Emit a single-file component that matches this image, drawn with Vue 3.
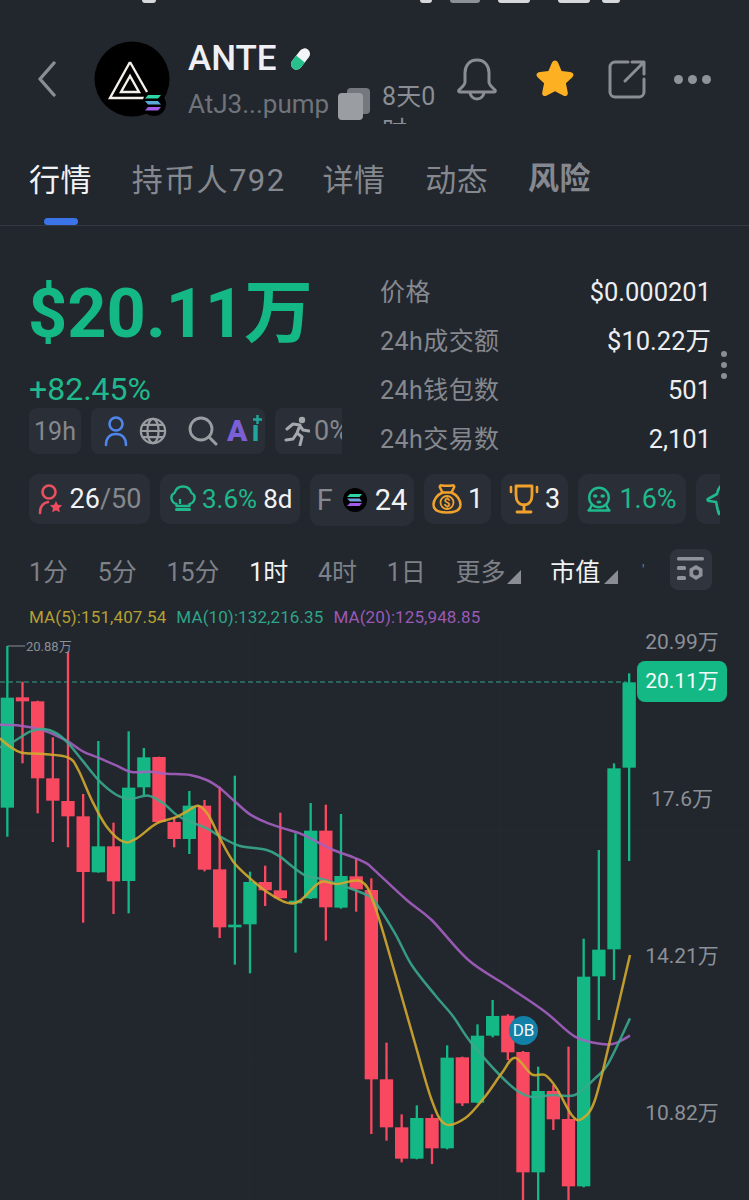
<script setup>
import { computed } from "vue";

// all chart numbers are in 3x units, y counted from the top of the chart
const candles = [
  ["g", 48, 203, 533, 620], ["r", 155, 202, 214, 400], ["r", 212, 214, 445, 550], ["r", 322, 445, 512, 636],
  ["r", 65, 513, 559, 652], ["r", 492, 559, 726, 878], ["g", 333, 649, 727, 728], ["r", 578, 649, 754, 852],
  ["g", 304, 473, 753, 850], ["g", 354, 382, 472, 495], ["r", 380, 381, 576, 576], ["r", 560, 576, 627, 652],
  ["g", 483, 527, 627, 672], ["r", 510, 527, 719, 724], ["r", 470, 718, 892, 924], ["g", 437, 884, 891, 1004],
  ["g", 725, 756, 883, 1030], ["r", 707, 756, 781, 828], ["r", 548, 781, 805, 805], ["g", 610, 812, 812, 968],
  ["g", 519, 602, 805, 807], ["r", 524, 602, 832, 932], ["g", 552, 738, 833, 836], ["r", 685, 739, 778, 845],
  ["r", 745, 780, 1348, 1512], ["r", 1238, 1348, 1492, 1532], ["r", 1453, 1492, 1586, 1597], ["g", 1426, 1464, 1586, 1588],
  ["r", 1453, 1464, 1555, 1602], ["g", 1246, 1283, 1555, 1558], ["r", 1280, 1282, 1420, 1428], ["g", 1183, 1217, 1418, 1420],
  ["g", 1110, 1158, 1217, 1222], ["r", 1153, 1157, 1267, 1290], ["r", 1263, 1266, 1627, 1720], ["g", 1310, 1383, 1627, 1720],
  ["r", 1365, 1383, 1468, 1500], ["r", 1250, 1467, 1669, 1720], ["g", 926, 1040, 1669, 1672], ["g", 660, 959, 1039, 1170],
  ["g", 400, 415, 958, 1050], ["g", 130, 157, 413, 693],
].map((c, i) => ({ up: c[0] === "g", x: 22 + 45.5 * i, hi: c[1], top: c[2], bot: c[3], lo: c[4] }));

const ma20 = [[0,284],[60,287],[120,298],[165,315],[205,335],[250,365],[300,385],[350,407],[395,426],[450,425],[500,431],[570,435],[620,450],[660,475],[705,515],[750,553],[800,578],[850,595],[900,610],[950,635],[1000,660],[1060,682],[1100,700],[1125,722],[1220,810],[1295,870],[1405,990],[1525,1070],[1635,1145],[1725,1220],[1805,1242],[1845,1240],[1890,1217]];
const ma10 = [[0,352],[40,335],[90,305],[130,297],[170,310],[205,340],[250,395],[300,455],[350,495],[390,507],[445,497],[490,520],[530,555],[570,575],[620,595],[670,625],[720,648],[800,660],[840,680],[880,712],[920,738],[970,748],[1050,775],[1100,795],[1125,815],[1185,910],[1235,1005],[1305,1095],[1360,1160],[1415,1240],[1525,1360],[1590,1400],[1655,1395],[1725,1395],[1785,1345],[1825,1300],[1890,1165]];
const ma5 = [[0,325],[30,350],[65,368],[130,372],[205,383],[235,420],[275,510],[320,590],[370,635],[410,625],[470,580],[525,563],[560,545],[595,527],[625,555],[660,625],[700,695],[750,745],[800,785],[860,818],[900,812],[960,757],[1010,762],[1085,755],[1125,830],[1185,1030],[1245,1240],[1295,1410],[1335,1482],[1395,1465],[1455,1400],[1505,1330],[1545,1283],[1595,1333],[1635,1335],[1670,1375],[1715,1455],[1745,1467],[1785,1410],[1835,1210],[1890,975]];

// catmull-rom through the points
const smooth = (pts) => {
  let d = `M${pts[0][0]} ${pts[0][1]}`;
  for (let i = 0; i < pts.length - 1; i++) {
    const a = pts[Math.max(i - 1, 0)];
    const b = pts[i];
    const c = pts[i + 1];
    const e = pts[Math.min(i + 2, pts.length - 1)];
    d += `C${b[0] + (c[0] - a[0]) / 6} ${b[1] + (c[1] - a[1]) / 6} ${c[0] - (e[0] - b[0]) / 6} ${c[1] - (e[1] - b[1]) / 6} ${c[0]} ${c[1]}`;
  }
  return d;
};

const lines = computed(() => [
  { d: smooth(ma20), color: "#a45fc0" },
  { d: smooth(ma10), color: "#3aa98d" },
  { d: smooth(ma5), color: "#d1a92f" },
]);

const tabs = ["行情", "持币人792", "详情", "动态", "风险"];
const stats = [
  ["价格", "$0.000201"],
  ["24h成交额", "$10.22万"],
  ["24h钱包数", "501"],
  ["24h交易数", "2,101"],
];
const frames = [
  { t: "1分" }, { t: "5分" }, { t: "15分" }, { t: "1时", on: true }, { t: "4时" }, { t: "1日" },
  { t: "更多", more: true }, { t: "市值", on: true, more: true },
];
</script>

<template>
  <div class="page">
    <div class="status">
      <i class="st" style="width: 14px; margin-left: 142px"></i>
      <i class="st" style="width: 12px; margin-left: 264px"></i>
      <i class="st" style="width: 30px; margin-left: 18px; opacity: 0.6"></i>
      <i class="st" style="width: 32px; margin-left: 18px"></i>
      <i class="st" style="width: 32px; margin-left: 28px"></i>
      <i class="st" style="width: 18px; margin-left: 12px"></i>
    </div>

    <header class="head">
      <svg class="back" width="20" height="36" viewBox="0 0 20 36">
        <path d="M17 2 3 18l14 16" fill="none" stroke="#8a8e94" stroke-width="3.4" stroke-linecap="round" stroke-linejoin="round" />
      </svg>

      <div class="avatar">
        <svg width="76" height="76" viewBox="0 0 76 76">
          <circle cx="38" cy="38" r="37.5" fill="#000" />
          <path d="M36 21 16 57h34M36 21l17 30" fill="none" stroke="#f4efe8" stroke-width="2.4" />
          <path d="M36 35 27 51h18z" fill="none" stroke="#f4efe8" stroke-width="2.4" />
          <circle cx="60" cy="63" r="12" fill="#000" />
          <path d="M54 54h13l-3 3.4H51z" fill="#2fd6a5" />
          <path d="M51 60h13l3 3.4H54z" fill="#5aa7d8" />
          <path d="M54 66h13l-3 3.4H51z" fill="#a25be8" />
        </svg>
      </div>

      <div class="name">
        <div class="title">
          <span class="ante">ANTE</span>
          <svg width="23" height="24" viewBox="0 0 23 24">
            <g transform="rotate(38 11.5 12)">
              <rect x="6" y="0" width="11" height="24" rx="5.5" fill="#f2f4f5" />
              <path d="M6 12h11v6.5a5.5 5.5 0 0 1-11 0z" fill="#27c08d" />
            </g>
          </svg>
        </div>
        <div class="addr">
          <span>AtJ3...pump</span>
          <svg width="32" height="32" viewBox="0 0 32 32">
            <rect x="9" y="0" width="23" height="26" rx="4" fill="#75797f" />
            <rect x="0" y="5" width="25" height="27" rx="4" fill="#9a9da2" />
          </svg>
          <span class="age">8天0<br />时</span>
        </div>
      </div>

      <div class="acts">
        <svg width="42" height="44" viewBox="0 0 42 44">
          <path d="M21 3c-8 0-12 6-12 13v9c0 3-3 5-6 8-1 1 0 2 1 2h34c1 0 2-1 1-2-3-3-6-5-6-8v-9c0-7-4-13-12-13z" fill="none" stroke="#8a8e94" stroke-width="3" stroke-linejoin="round" />
          <path d="M14 35a7 7 0 0 0 14 0" fill="none" stroke="#8a8e94" stroke-width="3" />
        </svg>
        <svg width="42" height="40" viewBox="0 0 42 40">
          <path d="M21 1.5c1.600 0 2.500 1 3.200 2.500l3.400 8 8.300.9c3.600.4 4.700 3.100 2.200 5.500l-6.200 5.900 1.800 8.800c.7 3.300-1.600 5-4.500 3.400L21 32.200l-8.200 4.300c-2.900 1.600-5.200-.1-4.500-3.400l1.800-8.800-6.200-5.900c-2.500-2.400-1.400-5.100 2.200-5.500l8.300-.9 3.400-8C18.500 2.500 19.400 1.500 21 1.500z" fill="#fdb022" />
        </svg>
        <svg width="38" height="40" viewBox="0 0 38 40">
          <path d="M20 3H7a5 5 0 0 0-5 5v25a5 5 0 0 0 5 5h24a5 5 0 0 0 5-5V20" fill="none" stroke="#8a8e94" stroke-width="3" stroke-linecap="round" />
          <path d="M24 3h12v12M35 4 17 22" fill="none" stroke="#8a8e94" stroke-width="3" stroke-linecap="round" stroke-linejoin="round" />
        </svg>
        <div class="dots"><i></i><i></i><i></i></div>
      </div>
    </header>

    <nav class="tabs">
      <div v-for="(t, i) in tabs" :key="t" class="tab" :class="{ on: i === 0, wide: i === 1, bold: i === 4 }">{{ t }}</div>
    </nav>

    <section class="summary">
      <div class="left">
        <div class="price">$20.11万</div>
        <div class="change">+82.45%</div>
        <div class="chips">
          <div class="chip age19">19h</div>
          <div class="chip links">
            <svg width="24" height="32" viewBox="0 0 24 32">
              <circle cx="12" cy="9" r="6.500" fill="none" stroke="#4f86ee" stroke-width="2.600" />
              <path d="M2 30c0-7 4-11 10-11s10 4 10 11" fill="none" stroke="#4f86ee" stroke-width="2.600" stroke-linecap="round" />
            </svg>
            <svg width="28" height="28" viewBox="0 0 30 30">
              <g fill="none" stroke="#9a9da2" stroke-width="2.400">
                <circle cx="15" cy="15" r="13" />
                <ellipse cx="15" cy="15" rx="6" ry="13" />
                <path d="M2 15h26M4 8.500h22M4 21.500h22" />
              </g>
            </svg>
            <svg class="lens" width="30" height="30" viewBox="0 0 30 30">
              <circle cx="13" cy="13" r="11" fill="none" stroke="#9a9da2" stroke-width="2.800" />
              <path d="m21 21 7 7" stroke="#9a9da2" stroke-width="3" stroke-linecap="round" />
            </svg>
            <span class="ai">
              <b>A</b><em>ı</em>
              <svg class="spark" width="9" height="9" viewBox="0 0 9 9">
                <path d="M4.500 0v9M0 4.500h9" stroke="#22a59a" stroke-width="2.400" />
              </svg>
            </span>
          </div>
          <div class="chip run">
            <svg width="26" height="30" viewBox="0 0 26 30">
              <circle cx="18" cy="4" r="3.200" fill="#a5a8ad" />
              <path d="M3 13l6-5 7 1-3 8 5 4-2 8M13 17l-4 6-7 1M16 10l3 4 6 1" fill="none" stroke="#a5a8ad" stroke-width="3" stroke-linecap="round" stroke-linejoin="round" />
            </svg>
            <span>0%</span>
          </div>
        </div>
      </div>

      <div class="stats">
        <div v-for="s in stats" :key="s[0]" class="stat">
          <span class="k">{{ s[0] }}</span>
          <span class="v">{{ s[1] }}</span>
        </div>
      </div>
      <div class="vdots"><i></i><i></i><i></i></div>
    </section>

    <div class="tags">
      <div class="tag t1">
        <svg width="24" height="32" viewBox="0 0 24 32">
          <circle cx="11" cy="9" r="6.500" fill="none" stroke="#e8505f" stroke-width="2.600" />
          <path d="M2 30c0-6 3-10 8-11" fill="none" stroke="#e8505f" stroke-width="2.600" stroke-linecap="round" />
          <path d="m18 18 1.800 3.800 4.200.5-3 2.900.8 4.100-3.800-2-3.800 2 .8-4.100-3-2.900 4.200-.5z" fill="#ef4d5f" />
        </svg>
        <span class="w">26</span><span class="g">/50</span>
      </div>
      <div class="tag t2">
        <svg width="26" height="28" viewBox="0 0 26 28">
          <path d="M6.500 19C1 18-.5 10 4.500 8 6 3 9.500 1.500 13 1.500S20 3 21.500 8c5 2 3.500 10-2 11v2h-13z" fill="none" stroke="#1fb98c" stroke-width="2.400" stroke-linejoin="round" />
          <path d="M6.500 24.500h13" stroke="#1fb98c" stroke-width="3" stroke-linecap="round" />
          <path d="M10 14v5" stroke="#1fb98c" stroke-width="2.200" />
        </svg>
        <span class="n">3.6%</span><span class="w d8">8d</span>
      </div>
      <div class="tag t3">
        <span class="g f">F</span>
        <svg width="24" height="24" viewBox="0 0 24 24">
          <circle cx="12" cy="12" r="12" fill="#000" />
          <path d="M7 6h12l-2.500 3H4z" fill="#2fd6a5" />
          <path d="M4 10.500h12.500l2.500 3H7z" fill="#6fa0dc" />
          <path d="M7 15h12l-2.500 3H4z" fill="#a25be8" />
        </svg>
        <span class="w">24</span>
      </div>
      <div class="tag t4">
        <svg width="30" height="30" viewBox="0 0 30 30">
          <path d="M10.500 8.500 8 3.500c-.6-1.200.2-2.300 1.500-2.100 3.500.5 7.500.5 11 0 1.300-.2 2.100.9 1.500 2.100l-2.500 5C25 11 28.500 16 28.500 20.500c0 5.500-5 8-13.500 8s-13.500-2.500-13.500-8C1.500 16 5 11 10.500 8.500z" fill="none" stroke="#f2a22c" stroke-width="2.500" stroke-linejoin="round" />
          <path d="M10.500 8.500h9" stroke="#f2a22c" stroke-width="2.500" />
          <circle cx="15" cy="18.500" r="6.500" fill="none" stroke="#f2a22c" stroke-width="1.800" />
          <text x="15" y="23" text-anchor="middle" font-size="12" font-weight="700" fill="#f2a22c" font-family="Roboto, sans-serif">$</text>
        </svg>
        <span class="w">1</span>
      </div>
      <div class="tag t5">
        <svg width="30" height="30" viewBox="0 0 30 30">
          <path d="M7 2h16v9c0 6-3 10-8 10S7 17 7 11z" fill="none" stroke="#f2a22c" stroke-width="2.800" stroke-linejoin="round" />
          <path d="M15 21v6M8 28h14" stroke="#f2a22c" stroke-width="2.800" stroke-linecap="round" />
          <path d="M2 3v5M28 3v5" stroke="#f2a22c" stroke-width="2.600" stroke-linecap="round" />
        </svg>
        <span class="w">3</span>
      </div>
      <div class="tag t6">
        <svg width="24" height="26" viewBox="0 0 24 26">
          <circle cx="12" cy="11.500" r="9.800" fill="none" stroke="#1fb98c" stroke-width="2.400" />
          <path d="M5 18c-.5 2.500-1.500 4.500-3.500 6.500h21C20.500 22.500 19.500 20.500 19 18" fill="none" stroke="#1fb98c" stroke-width="2.400" stroke-linejoin="round" />
          <ellipse cx="8.300" cy="10" rx="2.300" ry="1.700" fill="#1fb98c" />
          <ellipse cx="15.700" cy="10" rx="2.300" ry="1.700" fill="#1fb98c" />
          <ellipse cx="12" cy="16" rx="2.500" ry="1.600" fill="#1fb98c" />
        </svg>
        <span class="n">1.6%</span>
      </div>
      <div class="tag t7">
        <svg width="22" height="36" viewBox="0 0 22 36">
          <path d="M20 2c-5 2-7 6-8 11l-9 5c-1 1 0 2 1 2l7 1c1 3 1 7 3 12l3-5 5 1" fill="none" stroke="#1fb98c" stroke-width="2.600" stroke-linejoin="round" />
        </svg>
      </div>
    </div>

    <div class="frames">
      <div v-for="f in frames" :key="f.t" class="frame" :class="{ on: f.on, more: f.more }">
        {{ f.t }}<i v-if="f.more" class="tri"></i>
      </div>
      <span class="tick">'</span>
      <div class="cfg">
        <svg width="28" height="26" viewBox="0 0 28 26">
          <rect x="0" y="0" width="27" height="3.600" rx="1.500" fill="#8f9298" />
          <rect x="0" y="9" width="9" height="4" rx="1.500" fill="#8f9298" />
          <rect x="0" y="19" width="9" height="4" rx="1.500" fill="#8f9298" />
          <path d="M19 8l6.500 3.700v7.400L19 23l-6.500-3.900v-7.400z" fill="#8f9298" />
          <circle cx="19" cy="15.500" r="3" fill="#30353d" />
        </svg>
      </div>
    </div>

    <div class="legend">
      <span class="c5">MA(5):151,407.54</span>
      <span class="c10">MA(10):132,216.35</span>
      <span class="c20">MA(20):125,948.85</span>
    </div>

    <div class="chart">
      <svg class="plot" width="749" height="570" viewBox="0 0 2247 1710">
        <g stroke="#282c33" stroke-width="2.500">
          <path d="M750 0V1710M1500 0V1710M0 603H2247M0 1284H2247" />
        </g>
        <path d="M0 156H1880" stroke="#35a48c" stroke-width="3.500" stroke-dasharray="15 9" fill="none" />
        <path d="M22 50V48H76" stroke="#8a8e94" stroke-width="3" fill="none" />
        <g v-for="c in candles" :key="c.x" :fill="c.up ? '#14b885' : '#f84960'" :stroke="c.up ? '#14b885' : '#f84960'">
          <path :d="`M${c.x} ${c.hi}V${c.lo}`" stroke-width="7" fill="none" />
          <rect :x="c.x - 20" :y="c.top" width="40" :height="Math.max(c.bot - c.top, 8)" stroke="none" />
        </g>
        <path v-for="l in lines" :key="l.color" :d="l.d" :stroke="l.color" stroke-width="7.500" fill="none" stroke-opacity="0.9" />
      </svg>

      <span class="hi-label">20.88万</span>
      <span class="db">DB</span>
      <div class="axis a1">20.99万</div>
      <div class="now">20.11万</div>
      <div class="axis a2">17.6万</div>
      <div class="axis a3">14.21万</div>
      <div class="axis a4">10.82万</div>
    </div>
  </div>
</template>

<style>
html,
body {
  margin: 0;
  background: #22262d;
}
</style>

<style scoped>
.page {
  width: 749px;
  height: 1200px;
  overflow: hidden;
  display: flex;
  flex-direction: column;
  background: #22262d;
  font-family: Roboto, "Noto Sans CJK SC", sans-serif;
  color: #85888e;
}

.status {
  height: 4px;
  display: flex;
  flex-shrink: 0;
}
.st {
  display: block;
  height: 3px;
  background: #d6d8da;
  border-radius: 0 0 3px 3px;
}

.head {
  height: 120px;
  flex-shrink: 0;
  box-sizing: border-box;
  padding: 37px 0 0 37px;
  display: flex;
  align-items: flex-start;
}
.back {
  margin: 20px 37px 0 0;
}
.avatar {
  width: 76px;
  height: 76px;
  margin-right: 18px;
}
.name {
  width: 248px;
  flex-shrink: 0;
}
.title {
  display: flex;
  align-items: center;
  gap: 12px;
  height: 36px;
}
.ante {
  font-size: 35px;
  font-weight: 500;
  color: #eef0f4;
  line-height: 36px;
}
.addr {
  display: flex;
  align-items: flex-start;
  margin-top: 8px;
  height: 39px;
  overflow: hidden;
  font-size: 26px;
  line-height: 38px;
  color: #6f737a;
}
.addr svg {
  margin: 3px 0 0 9px;
  flex-shrink: 0;
}
.age {
  margin-left: 12px;
  font-size: 25px;
  line-height: 34px;
  color: #8a8e94;
  flex-shrink: 0;
  margin-top: -5px;
}
.acts {
  display: flex;
  align-items: center;
  gap: 33px;
  margin: 16px 0 0 21px;
}
.acts svg:nth-child(1) {
  margin-left: -1px;
}
.acts svg:nth-child(2) {
  margin-left: 3px;
}
.acts svg:nth-child(3) {
  margin-left: -1px;
}
.dots {
  display: flex;
  gap: 5px;
  margin-left: -5px;
}
.dots i {
  width: 9px;
  height: 9px;
  border-radius: 50%;
  background: #8f9298;
}

.tabs {
  height: 102px;
  flex-shrink: 0;
  box-sizing: border-box;
  display: flex;
  gap: 40px;
  padding: 33px 0 0 29px;
  border-bottom: 1px solid #343840;
  font-size: 31px;
  line-height: 48px;
  letter-spacing: 0.4px;
  color: #85888e;
}
.tab {
  position: relative;
  height: 68px;
}
.tab.on {
  color: #f2f3f5;
}
.tab.on::after {
  content: "";
  position: absolute;
  left: 15px;
  bottom: 0;
  width: 34px;
  height: 7px;
  border-radius: 4px;
  background: #3b74e8;
}
.tab.wide {
  letter-spacing: 1.4px;
  margin-right: -3px;
}
.tab.bold {
  font-weight: 700;
  margin-top: -2px;
}

.summary {
  position: relative;
  display: flex;
  padding: 40px 38px 0 29px;
  height: 196px;
  flex-shrink: 0;
}
.left {
  width: 313px;
  flex-shrink: 0;
  overflow: hidden;
}
.price {
  margin-top: 14px;
  margin-left: -1px;
  font-size: 68.5px;
  line-height: 68px;
  font-weight: 700;
  color: #14b885;
}
.change {
  margin-top: 25px;
  font-size: 32px;
  line-height: 32px;
  color: #1fb98c;
}
.chips {
  display: flex;
  gap: 10px;
  margin-top: 3px;
}
.chip {
  height: 46px;
  flex-shrink: 0;
  display: flex;
  align-items: center;
  background: #2a2f37;
  border-radius: 8px;
  font-size: 25px;
  color: #85888e;
  box-sizing: border-box;
}
.age19 {
  width: 52px;
  justify-content: center;
}
.links {
  width: 174px;
  padding-left: 13px;
  gap: 11px;
}
.lens {
  margin-left: 10px;
}
.ai {
  position: relative;
  display: flex;
  font-size: 30px;
  line-height: 30px;
  font-weight: 700;
  margin-left: -2px;
}
.ai b {
  color: #7a5fd6;
}
.ai em {
  font-style: normal;
  color: #22a59a;
  margin-left: 4px;
}
.spark {
  position: absolute;
  right: -2px;
  top: -1px;
}
.run {
  width: 76px;
  padding-left: 9px;
  gap: 4px;
  font-size: 27px;
}
.stats {
  margin: 2px 0 0 38px;
  flex: 1;
}
.stat {
  height: 49px;
  display: flex;
  align-items: baseline;
  justify-content: space-between;
  font-size: 25px;
  line-height: 49px;
}
.k {
  color: #85888e;
  letter-spacing: 0.45px;
}
.v {
  color: #eceef1;
  font-size: 25.5px;
}
.vdots {
  position: absolute;
  right: 22px;
  top: 125px;
  display: flex;
  flex-direction: column;
  gap: 5px;
}
.vdots i {
  width: 6px;
  height: 6px;
  border-radius: 50%;
  background: #8a8e94;
}

.tags {
  display: flex;
  align-items: flex-start;
  gap: 10px;
  width: 691px;
  margin: 12px 0 0 29px;
  overflow: hidden;
  flex-shrink: 0;
  height: 53px;
}
.tag {
  height: 50px;
  flex-shrink: 0;
  display: flex;
  align-items: center;
  justify-content: center;
  background: #2a2f37;
  border-radius: 10px;
  box-sizing: border-box;
  font-size: 27px;
}
.w {
  color: #f2f3f5;
}
.g {
  color: #85888e;
}
.n {
  color: #1fb98c;
}
.t1 {
  width: 121px;
  gap: 8px;
}
.t1 .g {
  margin-left: -8px;
}
.t2 {
  width: 140px;
  gap: 6px;
  justify-content: flex-start;
  padding-left: 10px;
  font-size: 26px;
}
.d8 {
  margin-left: 0;
}
.t3 {
  width: 104px;
  height: 52px;
  gap: 8px;
  font-size: 29px;
}
.f {
  margin-right: 2px;
}
.t4,
.t5 {
  width: 67px;
  gap: 6px;
}
.t6 {
  width: 108px;
  gap: 8px;
}
.t7 {
  width: 40px;
  justify-content: flex-start;
  padding-left: 9px;
}

.frames {
  display: flex;
  align-items: center;
  gap: 29.700px;
  height: 41px;
  margin: 22px 0 0 29px;
  font-size: 25px;
  color: #7e8187;
  flex-shrink: 0;
  white-space: nowrap;
}
.frame {
  position: relative;
  flex-shrink: 0;
}
.frame.on {
  color: #f2f3f5;
}
.frame.more {
  padding-right: 15px;
}
.frame.more + .frame.more {
  padding-right: 18px;
}
.tri {
  position: absolute;
  right: 0;
  bottom: 4px;
  width: 0;
  height: 0;
  border-left: 14px solid transparent;
  border-bottom: 14px solid #8a8e94;
}
.tick {
  font-size: 14px;
  margin: 0 -14px 0 -6px;
}
.cfg {
  width: 42px;
  height: 41px;
  flex-shrink: 0;
  margin-left: auto;
  margin-right: 37px;
  background: #30353d;
  border-radius: 8px;
  display: flex;
  align-items: center;
  justify-content: center;
}

.legend {
  display: flex;
  gap: 10px;
  height: 24px;
  margin: 15px 0 0 29px;
  font-size: 17px;
  line-height: 24px;
  letter-spacing: 0.1px;
  flex-shrink: 0;
}
.c5 {
  color: #b5a033;
}
.c10 {
  color: #2ea488;
}
.c20 {
  color: #9b59b6;
}

.chart {
  position: relative;
  flex: 1;
  margin-top: 1px;
}
.plot {
  position: absolute;
  left: 0;
  top: 0;
}
.hi-label {
  position: absolute;
  left: 26px;
  top: 9px;
  font-size: 13px;
  line-height: 16px;
  color: #8a8e94;
}
.db {
  position: absolute;
  left: 509px;
  top: 386px;
  width: 29px;
  height: 29px;
  border-radius: 50%;
  background: #1380a8;
  color: #f2f6f8;
  font-size: 17px;
  line-height: 29px;
  text-align: center;
}
.axis {
  position: absolute;
  left: 637px;
  width: 90px;
  text-align: center;
  font-size: 21px;
  line-height: 26px;
  color: #8c9097;
}
.a1 {
  top: -1px;
}
.a2 {
  top: 156px;
}
.a3 {
  top: 313px;
}
.a4 {
  top: 470px;
}
.now {
  position: absolute;
  left: 637px;
  top: 31px;
  width: 90px;
  height: 41px;
  border-radius: 8px;
  background: #14b885;
  color: #f4fbf8;
  font-size: 21px;
  line-height: 41px;
  text-align: center;
}
</style>
